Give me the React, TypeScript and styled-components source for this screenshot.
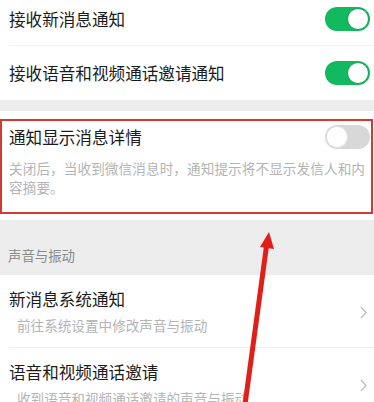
import React from "react";
import styled, { createGlobalStyle } from "styled-components";

const GlobalStyle = createGlobalStyle`
  html, body {
    margin: 0;
    padding: 0;
    background: #ededed;
  }
  body {
    font-family: "Noto Sans CJK SC", "Noto Sans", sans-serif;
    -webkit-font-smoothing: antialiased;
  }
`;

const Page = styled.div`
  position: relative;
  width: 374px;
  height: 402px;
  overflow: hidden;
  background: #ededed;
`;

const Group = styled.div<{ $gap?: number }>`
  background: #fff;
  margin-top: ${(p) => p.$gap ?? 0}px;
`;

const Row = styled.div<{ $divider?: boolean }>`
  display: flex;
  align-items: center;
  min-height: 54px;
  padding: 0 4px 0 9px;
  position: relative;
  &::after {
    content: "";
    display: ${(p) => (p.$divider ? "block" : "none")};
    position: absolute;
    left: 9px;
    right: 0;
    bottom: 0;
    height: 1px;
    background: #f2f2f2;
  }
`;

const Title = styled.div`
  flex: 1;
  font-size: 16.6px;
  line-height: 22px;
  color: #1b1b1b;
`;

const Toggle = styled.div<{ $on?: boolean }>`
  position: relative;
  width: 45px;
  height: 24px;
  border-radius: 12px;
  background: ${(p) => (p.$on ? "#12b95e" : "#d8d8d8")};
  flex-shrink: 0;
  &::after {
    content: "";
    position: absolute;
    top: 1px;
    left: ${(p) => (p.$on ? "22px" : "1px")};
    width: 20px;
    height: 20px;
    border-radius: 50%;
    background: #fff;
    border: 1px solid ${(p) => (p.$on ? "#0ea255" : "#e2e2e2")};
  }
`;

const DetailCell = styled.div`
  padding: 12px 4px 23px 9px;
`;

const DetailHead = styled.div`
  display: flex;
  align-items: center;
  height: 28px;
`;

const Desc = styled.div`
  margin-top: 8px;
  margin-right: -4px;
  font-size: 13.6px;
  line-height: 19px;
  letter-spacing: 0.1px;
  color: #b4b4b4;
`;

const SectionLabel = styled.div`
  height: 55px;
  display: flex;
  align-items: flex-end;
  padding: 0 0 10px 8px;
  box-sizing: border-box;
  font-size: 13.4px;
  line-height: 19px;
  color: #8a8a8a;
`;

const LinkRow = styled.div<{ $divider?: boolean }>`
  display: flex;
  align-items: center;
  height: 73px;
  box-sizing: border-box;
  padding: 0 7px 0 9px;
  position: relative;
  &::after {
    content: "";
    display: ${(p) => (p.$divider ? "block" : "none")};
    position: absolute;
    left: 9px;
    right: 0;
    bottom: 0;
    height: 1px;
    background: #efefef;
  }
`;

const LinkText = styled.div`
  flex: 1;
  align-self: flex-start;
  padding-top: 13px;
  display: flex;
  flex-direction: column;
`;

const LinkSub = styled.div`
  margin-top: 5px;
  padding-left: 8px;
  font-size: 13.6px;
  line-height: 20px;
  color: #b4b4b4;
`;

const Chevron = styled.svg`
  width: 7px;
  height: 13px;
  flex-shrink: 0;
  margin-top: 2px;
`;

const Highlight = styled.div`
  position: absolute;
  left: 0;
  top: 119px;
  width: 373px;
  height: 95px;
  border: 2px solid #d23a33;
  box-sizing: border-box;
  pointer-events: none;
`;

const Arrow = styled.svg`
  position: absolute;
  left: 0;
  top: 0;
  width: 374px;
  height: 402px;
  pointer-events: none;
`;

const Arr = () => (
  <Chevron viewBox="0 0 7 13">
    <path d="M1 1 L6 6.5 L1 12" fill="none" stroke="#bdbdbd" strokeWidth="1.3" />
  </Chevron>
);

export default function App() {
  return (
    <Page>
      <GlobalStyle />
      <Group $gap={-8}>
        <Row $divider>
          <Title>接收新消息通知</Title>
          <Toggle $on />
        </Row>
        <Row>
          <Title>接收语音和视频通话邀请通知</Title>
          <Toggle $on />
        </Row>
      </Group>
      <Group $gap={11}>
        <DetailCell>
          <DetailHead>
            <Title>通知显示消息详情</Title>
            <Toggle />
          </DetailHead>
          <Desc>关闭后，当收到微信消息时，通知提示将不显示发信人和内容摘要。</Desc>
        </DetailCell>
      </Group>
      <SectionLabel>声音与振动</SectionLabel>
      <Group>
        <LinkRow $divider>
          <LinkText>
            <Title>新消息系统通知</Title>
            <LinkSub>前往系统设置中修改声音与振动</LinkSub>
          </LinkText>
          <Arr />
        </LinkRow>
        <LinkRow>
          <LinkText>
            <Title>语音和视频通话邀请</Title>
            <LinkSub>收到语音和视频通话邀请的声音与振动</LinkSub>
          </LinkText>
          <Arr />
        </LinkRow>
      </Group>
      <Highlight />
      <Arrow viewBox="0 0 374 402">
        <line x1="244" y1="412" x2="266.5" y2="246" stroke="#e01f1a" strokeWidth="5" />
        <polygon points="269,232 274,249 260,247" fill="#e01f1a" />
      </Arrow>
    </Page>
  );
}
